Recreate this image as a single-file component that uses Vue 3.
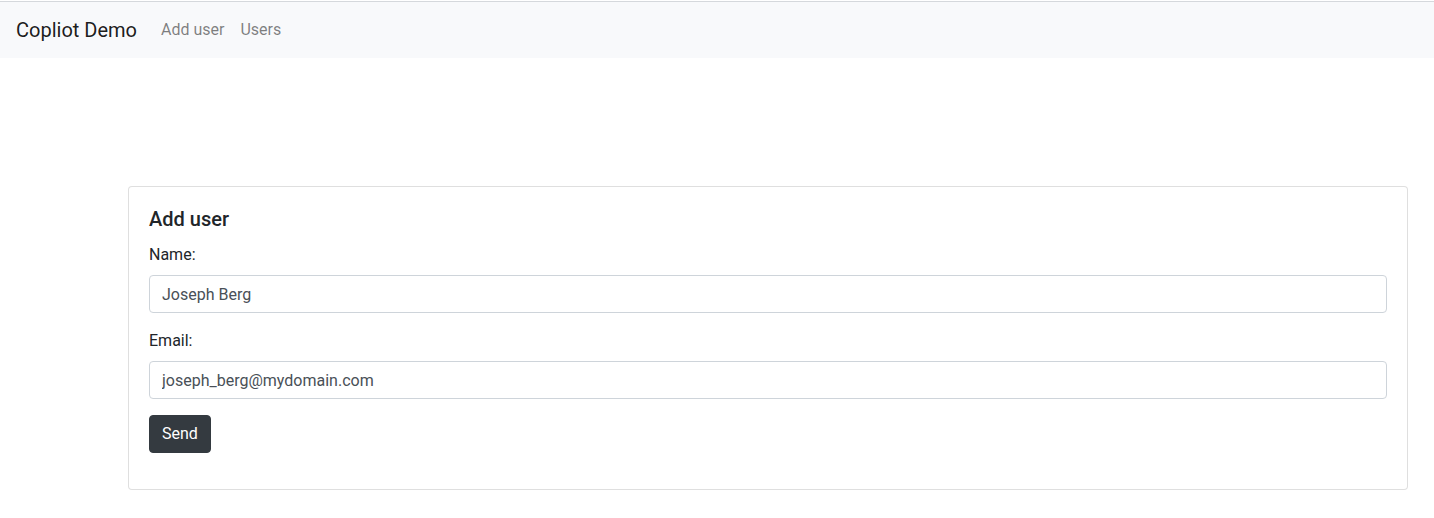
<template>
	<div class="app">
		<nav class="navbar">
			<a class="brand" href="#">Copliot Demo</a>
			<ul class="nav-links">
				<li v-for="link of links" :key="link.href">
					<a :href="link.href">{{link.title}}</a>
				</li>
			</ul>
		</nav>
		<main>
			<section class="card">
				<h5>Add user</h5>
				<form @submit.prevent="send">
					<div class="form-group">
						<label for="name">Name:</label>
						<input id="name" type="text" v-model="user.name" />
					</div>
					<div class="form-group">
						<label for="email">Email:</label>
						<input id="email" type="email" v-model="user.email" />
					</div>
					<button type="submit">Send</button>
				</form>
			</section>
		</main>
	</div>
</template>

<style>
	body
	{
		background: #fff;
	}
</style>

<style scoped>
	.app, .app *
	{
		box-sizing: border-box;
	}

	.app
	{
		padding-top: 1px;
		font-family: Roboto, "Liberation Sans", sans-serif;
		font-size: 16px;
		line-height: 24px;
		color: #212529;
	}

	.navbar
	{
		display: flex;
		align-items: center;
		padding: 8px 16px;
		border-top: 1px solid #d5d8dc;
		background: #f8f9fb;
	}

	.navbar a
	{
		text-decoration: none;
	}

	.brand
	{
		margin-right: 16px;
		padding: 5px 0;
		font-size: 20px;
		line-height: 30px;
		color: rgba(0, 0, 0, .9);
	}

	.nav-links
	{
		display: flex;
		margin: 0;
		padding: 0;
		list-style: none;
	}

	.nav-links a
	{
		display: block;
		padding: 8px;
		color: rgba(0, 0, 0, .5);
	}

	main
	{
		padding: 128px 26px 28px 128px;
	}

	.card
	{
		padding: 20px 20px 36px;
		border: 1px solid rgba(0, 0, 0, .125);
		border-radius: 4px;
		background: #fff;
	}

	h5
	{
		margin: 0 0 12px;
		font-size: 20px;
		font-weight: 500;
		line-height: 24px;
	}

	.form-group
	{
		margin-bottom: 16px;
	}

	label
	{
		display: block;
		margin-bottom: 8px;
	}

	input
	{
		display: block;
		width: 100%;
		height: 38px;
		padding: 6px 12px;
		border: 1px solid #ced4da;
		border-radius: 4px;
		font: inherit;
		color: #495057;
		background: #fff;
	}

	button
	{
		display: block;
		padding: 6px 12px;
		border: 1px solid #343a40;
		border-radius: 4px;
		font: inherit;
		color: #fff;
		background: #343a40;
		cursor: pointer;
	}
</style>

<script setup>
	import { reactive } from "vue";


	const links = [
		{ title: "Add user", href: "#/add" },
		{ title: "Users", href: "#/users" },
	];

	const user = reactive({
		name: "Joseph Berg",
		email: "joseph_berg@mydomain.com",
	});


	const send = () => {
		console.log("user:", user.name, user.email);
	};
</script>
